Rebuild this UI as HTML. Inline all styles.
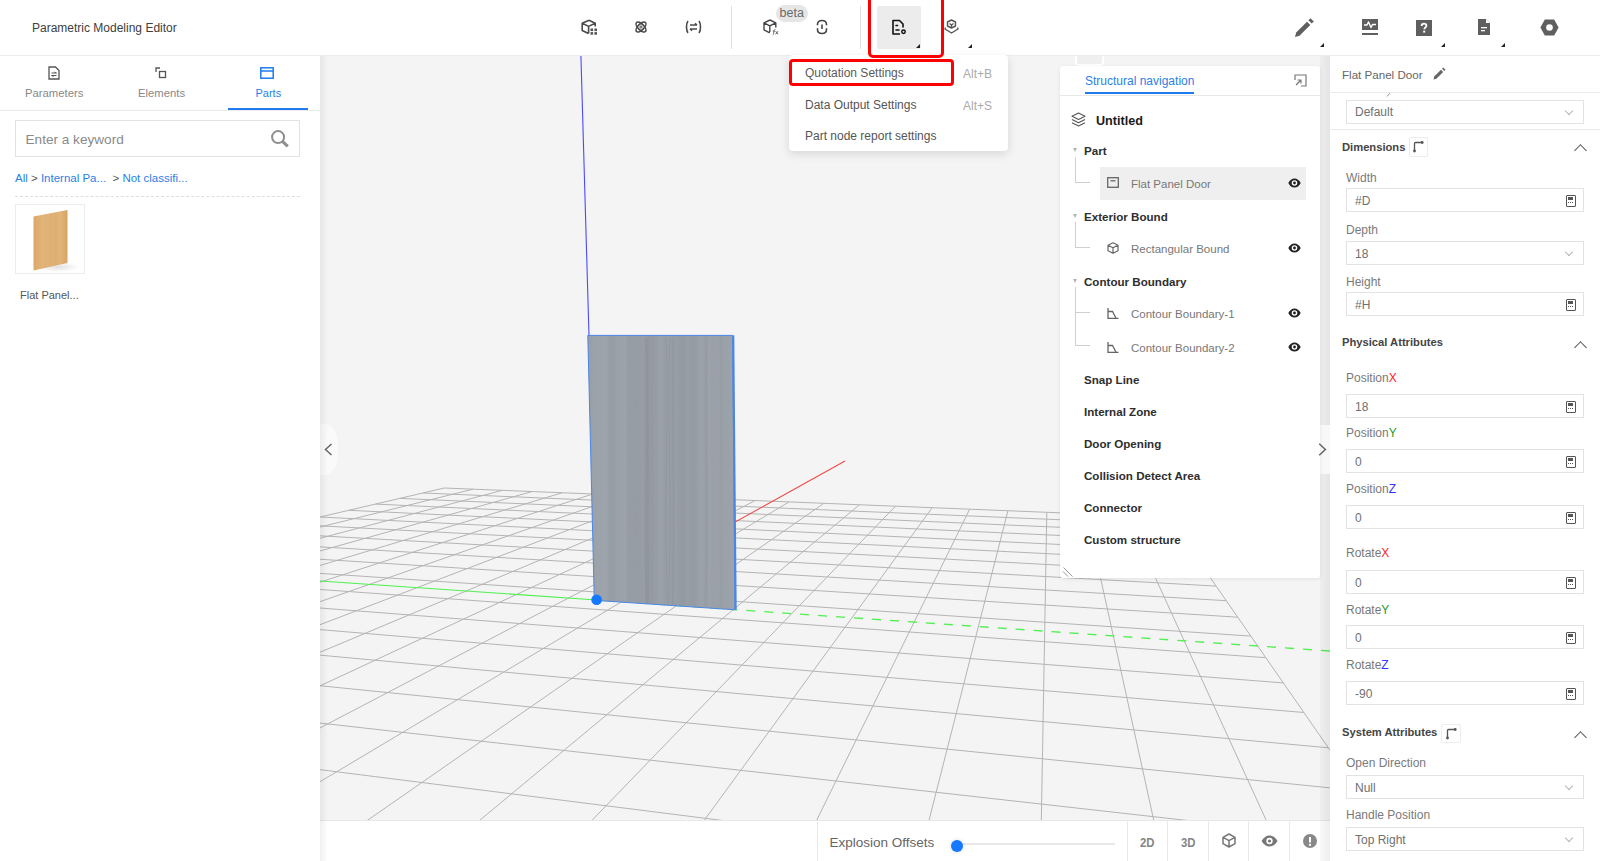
<!DOCTYPE html>
<html><head><meta charset="utf-8">
<style>
*{box-sizing:border-box;margin:0;padding:0}
html,body{width:1600px;height:861px;overflow:hidden;background:#fff;font-family:"Liberation Sans",sans-serif;color:#333}
.abs{position:absolute}
#header{position:absolute;left:0;top:0;width:1600px;height:56px;background:#fff;border-bottom:1px solid #ececec;z-index:5}
.t{position:absolute;white-space:nowrap;line-height:1}
.tri{position:absolute;width:0;height:0;border-left:4px solid transparent;border-bottom:4px solid #222}
#left{position:absolute;left:0;top:56px;width:320px;height:805px;background:#fff;z-index:3}
#vp{position:absolute;left:320px;top:56px;width:1010px;height:805px;background:#f4f4f4;overflow:hidden}
#right{position:absolute;left:1330px;top:56px;width:270px;height:805px;background:#fff;z-index:3}
.inp{position:absolute;left:16px;width:238px;height:24px;border:1px solid #e3e3e3;background:#fff}
.lbl{position:absolute;left:16px;font-size:12px;color:#7a7a7a;line-height:1}
.val{position:absolute;left:8px;top:5px;font-size:12px;color:#707070;line-height:14px}
.calc{position:absolute;right:7px;top:6px;width:10px;height:12px;border:1.5px solid #555;border-radius:1px}
.calc:before{content:"";position:absolute;left:1px;top:1px;width:5px;height:3px;background:#555}
.calc:after{content:"";position:absolute;left:1px;top:6px;width:5px;height:3px;border-top:1px dotted #555;border-bottom:1px dotted #555}
.chev{position:absolute;right:11px;top:7px;width:6px;height:6px;border-right:1px solid #b5b5b5;border-bottom:1px solid #b5b5b5;transform:rotate(45deg)}
.sec{position:absolute;left:12px;font-size:11.2px;font-weight:bold;color:#444;line-height:1}
.up{position:absolute;left:246px;width:9px;height:9px;border-left:1.3px solid #555;border-top:1.3px solid #555;transform:rotate(45deg)}
.nb{position:absolute;left:24px;font-size:11.6px;font-weight:bold;color:#2e2e2e;line-height:1}
.nc{position:absolute;left:71px;font-size:11.5px;color:#777;line-height:1}
.eye{position:absolute;left:228px;width:13px;height:10px}
</style></head><body>
<div id="header">
<div class="t" style="left:32px;top:22px;font-size:12px;color:#404040">Parametric Modeling Editor</div>
<!-- tool icons -->
<svg class="abs" style="left:581px;top:19px" width="17" height="16" viewBox="0 0 17 16" fill="none" stroke="#4a4a4a" stroke-width="1.6" stroke-linejoin="round">
<path d="M8 1.2L1.2 4.2V11.5L7.5 14.5M8 1.2L14.2 4.2V7.5M1.2 4.2L7.6 7.4L14.2 4.2M7.6 7.4V14.5"/>
<g fill="#555" stroke="none"><rect x="9.5" y="9.5" width="2.6" height="2.6"/><rect x="13.4" y="9.5" width="2.6" height="2.6"/><rect x="9.5" y="13.1" width="2.6" height="2.6"/><rect x="13.4" y="13.1" width="2.6" height="2.6"/></g>
</svg>
<svg class="abs" style="left:634px;top:20px" width="14" height="14" viewBox="0 0 14 14" fill="none" stroke="#4a4a4a" stroke-width="1.6">
<ellipse cx="7" cy="7" rx="6.3" ry="3" transform="rotate(45 7 7)"/><ellipse cx="7" cy="7" rx="6.3" ry="3" transform="rotate(-45 7 7)"/><circle cx="7" cy="7" r="1.1" stroke-width="1"/>
</svg>
<svg class="abs" style="left:685px;top:20px" width="17" height="14" viewBox="0 0 17 14" fill="none" stroke="#4a4a4a" stroke-width="1.6">
<path d="M3 1C1 3.5 1 10.5 3 13M14 1C16 3.5 16 10.5 14 13"/><path d="M5 5H12M10 3.3L12 5M12 9H5M7 10.7L5 9" stroke-width="1.4"/>
</svg>
<div class="abs" style="left:731px;top:6px;width:1px;height:43px;background:#e0e0e0"></div>
<div class="abs" style="left:776px;top:5px;width:32px;height:17px;border-radius:9px;background:#e6e6e6"></div>
<div class="t" style="left:779.5px;top:7px;font-size:12.5px;color:#6a6a6a">beta</div>
<svg class="abs" style="left:763px;top:19px" width="17" height="17" viewBox="0 0 17 17" fill="none" stroke="#444" stroke-width="1.4" stroke-linejoin="round">
<path d="M7 1L1 3.8V10.8L6.8 13.8M7 1L12.8 3.8V8.5M1 3.8L6.8 6.8L12.8 3.8M6.8 6.8V13"/>
<path d="M9.8 15.8C10.6 15.6 10.6 14.5 10.9 12.5C11.1 11.2 11.4 10.4 12.3 10.4M9.8 12.1H11.8M12.6 12.2L15 15.3M15 12.2L12.6 15.3" stroke-width="0.9" stroke="#555"/>
</svg>
<svg class="abs" style="left:816px;top:19px" width="12" height="16" viewBox="0 0 12 16" fill="none" stroke="#444" stroke-width="1.6">
<path d="M1.5 6.3V5.5C1.5 3 3 1.5 6 1.5S10.5 3 10.5 5.5V6.3M1.5 9.2V10.5C1.5 13 3 14.5 6 14.5S10.5 13 10.5 10.5V9.2M6 5.5V10"/>
</svg>
<div class="abs" style="left:860px;top:6px;width:1px;height:43px;background:#e0e0e0"></div>
<div class="abs" style="left:877px;top:6px;width:44px;height:43px;background:#ececec;border-radius:2px"></div>
<svg class="abs" style="left:891px;top:19px" width="17" height="17" viewBox="0 0 17 17" fill="none" stroke="#111" stroke-width="1.6" stroke-linejoin="round">
<path d="M9 15H2V1.5H8.5L12 5V8.5"/><path d="M5 6.5H6.5M5 11H8" stroke-linecap="round"/><circle cx="12.5" cy="12.8" r="1.7" stroke-width="1.5"/>
</svg>
<div class="tri" style="left:915.5px;top:43.5px;border-bottom-color:#222"></div>
<svg class="abs" style="left:944px;top:19px" width="15" height="16" viewBox="0 0 15 16" fill="none" stroke="#555" stroke-width="1.4" stroke-linejoin="round">
<path d="M7.5 1L3.5 3V7L7.5 9L11.5 7V3Z"/><path d="M5.5 4.5L7.5 6L9.5 4.5M7.5 6V8"/><path d="M1.5 8.5L1 10L7.5 14L14 10L13.5 8.5"/>
</svg>
<div class="tri" style="left:967.5px;top:43.5px"></div>
<!-- right icons -->
<svg class="abs" style="left:1294px;top:17px" width="21" height="21" viewBox="0 0 21 21">
<path d="M1 20L2.2 15.5L13 4.7L16.3 8L5.5 18.8Z" fill="#5f5f5f"/><path d="M14.4 3.3L16.5 1.2L19.8 4.5L17.7 6.6Z" fill="#5f5f5f"/>
</svg>
<div class="tri" style="left:1320px;top:43px"></div>
<svg class="abs" style="left:1362px;top:19px" width="16" height="17" viewBox="0 0 16 17">
<rect x="0" y="0" width="16" height="11" fill="#5f5f5f"/><path d="M2 6H5L6.5 3L9 8.5L10.5 5.5H14" fill="none" stroke="#fff" stroke-width="1.4" stroke-linejoin="round"/><rect x="0" y="14" width="16" height="2" fill="#5f5f5f"/>
</svg>
<svg class="abs" style="left:1416px;top:19.5px" width="16" height="16" viewBox="0 0 16 16">
<rect x="0" y="0" width="16" height="16" fill="#5f5f5f"/><path d="M5.6 6C5.6 4.5 6.6 3.6 8 3.6S10.4 4.5 10.4 5.8C10.4 7.3 8.3 7.5 8.3 9.3" fill="none" stroke="#fff" stroke-width="1.8"/><rect x="7.2" y="10.6" width="2" height="2" fill="#fff"/>
</svg>
<div class="tri" style="left:1441px;top:43px"></div>
<svg class="abs" style="left:1478px;top:19px" width="12" height="16" viewBox="0 0 12 16">
<path d="M0 0H8L12 4V16H0Z" fill="#5f5f5f"/><path d="M8 0V4H12" fill="#fff"/><rect x="3" y="8" width="6" height="1.3" fill="#fff"/><rect x="3" y="11" width="4" height="1.3" fill="#fff"/>
</svg>
<div class="tri" style="left:1501px;top:43px"></div>
<svg class="abs" style="left:1540px;top:19px" width="19" height="17" viewBox="0 0 19 17">
<path d="M4.8 0.5H14.2L18.6 8.5L14.2 16.5H4.8L0.4 8.5Z" fill="#5f5f5f"/><circle cx="9.5" cy="8.5" r="3.3" fill="#fff"/>
</svg>
</div>
<div class="abs" style="left:868px;top:-4px;width:76px;height:61.5px;border:3px solid #f00;border-radius:5px;z-index:8"></div>
<div id="left">
<!-- tabs -->
<svg class="abs" style="left:48px;top:10px" width="12" height="14" viewBox="0 0 12 14" fill="none" stroke="#555" stroke-width="1.3">
<path d="M1 1H7.5L11 4.5V13H1Z"/><path d="M3.5 7H8.5M3.5 9.5H8.5" stroke-width="1"/><path d="M6.5 6L8.5 7M5.5 10.5L3.5 9.5" stroke-width="0.9"/>
</svg>
<div class="t" style="left:25px;top:32px;font-size:11.3px;color:#888">Parameters</div>
<svg class="abs" style="left:155px;top:11px" width="12" height="12" viewBox="0 0 12 12" fill="none" stroke="#555" stroke-width="1.3">
<path d="M1 5V1H5"/><rect x="4.5" y="4.5" width="6" height="6"/>
</svg>
<div class="t" style="left:138px;top:32px;font-size:11.3px;color:#888">Elements</div>
<svg class="abs" style="left:260px;top:11px" width="14" height="12" viewBox="0 0 14 12" fill="none" stroke="#1e7bf0" stroke-width="1.5">
<rect x="0.8" y="0.8" width="12.4" height="10.4"/><path d="M0.8 4H13.2"/>
</svg>
<div class="t" style="left:255.5px;top:32px;font-size:11px;color:#2a7fe8">Parts</div>
<div class="abs" style="left:0;top:54px;width:320px;height:1px;background:#ebebeb"></div>
<div class="abs" style="left:228px;top:52px;width:80px;height:2px;background:#1e7bf0"></div>
<!-- search -->
<div class="abs" style="left:15px;top:64px;width:285px;height:37px;border:1px solid #e2e2e2;background:#fff"></div>
<div class="t" style="left:25.5px;top:77px;font-size:13.6px;color:#8a8a8a">Enter a keyword</div>
<svg class="abs" style="left:270px;top:73px" width="20" height="20" viewBox="0 0 20 20" fill="none" stroke="#8e8e8e" stroke-width="2">
<circle cx="8.1" cy="8.1" r="6"/><path d="M12.4 12.4L17.8 17.4" stroke-width="3"/>
</svg>
<div class="t" style="left:15px;top:116.5px;font-size:11.5px;color:#2a7fe8">All <span style="color:#555">&gt;</span> Internal Pa... &nbsp;<span style="color:#555">&gt;</span> Not classifi...</div>
<div class="abs" style="left:15px;top:140px;width:285px;height:0;border-top:1px dashed #dedede"></div>
<!-- thumb -->
<div class="abs" style="left:15px;top:148px;width:70px;height:70px;border:1px solid #ececec;background:#fff;overflow:hidden">
<svg class="abs" style="left:0;top:0" width="70" height="70" viewBox="0 0 70 70">
<defs><linearGradient id="wd" x1="0" x2="1" y1="0" y2="0"><stop offset="0" stop-color="#dca869"/><stop offset="0.3" stop-color="#e2b57a"/><stop offset="0.5" stop-color="#deb075"/><stop offset="0.8" stop-color="#e0b378"/><stop offset="1" stop-color="#d6a465"/></linearGradient>
<radialGradient id="sh" cx="0.5" cy="0.5" r="0.5"><stop offset="0" stop-color="#000" stop-opacity="0.12"/><stop offset="1" stop-color="#000" stop-opacity="0"/></radialGradient></defs>
<ellipse cx="42" cy="62" rx="22" ry="5" fill="url(#sh)"/>
<path d="M17.5 11.5L51.5 5V58L17.5 65.5Z" fill="url(#wd)"/>
<path d="M29 9.3V63M40 7.2V60.5" stroke="#c99555" stroke-width="0.5" opacity="0.35"/>
</svg>
</div>
<div class="t" style="left:20px;top:234px;font-size:11px;color:#555">Flat Panel...</div>
</div>
<div class="abs" style="left:320px;top:56px;width:8px;height:805px;background:linear-gradient(90deg,rgba(0,0,0,0.06),rgba(0,0,0,0));z-index:4"></div>
<div id="vp">
<svg class="abs" style="left:0;top:0" width="1010" height="805" viewBox="0 0 1010 805">
<defs>
<linearGradient id="wood" x1="0" x2="1" y1="0" y2="0"><stop offset="0.000" stop-color="#999fa7"/><stop offset="0.025" stop-color="#9aa0a8"/><stop offset="0.050" stop-color="#9ca2aa"/><stop offset="0.075" stop-color="#9da3ab"/><stop offset="0.100" stop-color="#9da3ab"/><stop offset="0.125" stop-color="#9ea4ac"/><stop offset="0.150" stop-color="#979da5"/><stop offset="0.175" stop-color="#979da5"/><stop offset="0.200" stop-color="#9ba1a9"/><stop offset="0.225" stop-color="#9ba1a9"/><stop offset="0.250" stop-color="#9da3ab"/><stop offset="0.275" stop-color="#979da5"/><stop offset="0.300" stop-color="#979da5"/><stop offset="0.325" stop-color="#969ca4"/><stop offset="0.350" stop-color="#979da5"/><stop offset="0.375" stop-color="#989ea6"/><stop offset="0.400" stop-color="#949aa2"/><stop offset="0.425" stop-color="#949aa2"/><stop offset="0.450" stop-color="#949aa2"/><stop offset="0.475" stop-color="#999fa7"/><stop offset="0.500" stop-color="#9ba1a9"/><stop offset="0.525" stop-color="#979da5"/><stop offset="0.550" stop-color="#9aa0a8"/><stop offset="0.575" stop-color="#969ca4"/><stop offset="0.600" stop-color="#989ea6"/><stop offset="0.625" stop-color="#959ba3"/><stop offset="0.650" stop-color="#9399a1"/><stop offset="0.675" stop-color="#989ea6"/><stop offset="0.700" stop-color="#969ca4"/><stop offset="0.725" stop-color="#959ba3"/><stop offset="0.750" stop-color="#9aa0a8"/><stop offset="0.775" stop-color="#9ca2aa"/><stop offset="0.800" stop-color="#989ea6"/><stop offset="0.825" stop-color="#9ca2aa"/><stop offset="0.850" stop-color="#9aa0a8"/><stop offset="0.875" stop-color="#9ba1a9"/><stop offset="0.900" stop-color="#979da5"/><stop offset="0.925" stop-color="#9ba1a9"/><stop offset="0.950" stop-color="#9ba1a9"/><stop offset="0.975" stop-color="#9da3ab"/><stop offset="1.000" stop-color="#9ea4ac"/></linearGradient>
<clipPath id="pclip"><path d="M267.8 279.4L412.7 279.4L415.1 553.8L274.3 544.3Z"/></clipPath></defs>
<path d="M-1377.8 783.2L124.2 432.0 M-1320.1 797.7L153.0 433.2 M-1258.8 813.0L182.2 434.4 M-1193.6 829.4L211.9 435.6 M-1124.2 846.8L242.2 436.8 M-1050.2 865.3L272.9 438.0 M-971.0 885.2L304.2 439.3 M-886.2 906.5L336.0 440.6 M-795.0 929.3L368.4 441.9 M-696.8 953.9L401.4 443.2 M-590.7 980.6L435.0 444.6 M-475.7 1009.4L469.1 445.9 M-350.6 1040.8L503.9 447.3 M-214.1 1075.0L539.4 448.8 M-64.4 1112.5L575.5 450.2 M100.3 1153.8L612.2 451.7 M282.5 1199.5L649.7 453.2 M485.1 1250.3L687.9 454.8 M711.7 1307.2L726.8 456.3 M967.0 1371.2L766.5 457.9 M1256.6 1443.8L807.0 459.6 M1588.1 1526.9L848.3 461.2 M-1377.8 783.2L1588.1 1526.9 M-1155.2 731.1L1391.4 1243.6 M-975.1 689.0L1268.1 1065.9 M-826.4 654.3L1183.5 944.1 M-701.5 625.1L1121.9 855.3 M-595.2 600.2L1075.0 787.8 M-503.6 578.8L1038.1 734.7 M-423.9 560.2L1008.4 691.8 M-353.8 543.8L983.9 656.5 M-291.8 529.3L963.3 626.9 M-236.5 516.4L945.8 601.7 M-186.8 504.8L930.8 580.1 M-142.0 494.3L917.7 561.2 M-101.4 484.8L906.2 544.7 M-64.4 476.2L896.1 530.1 M-30.6 468.2L887.0 517.0 M0.5 461.0L878.9 505.3 M29.1 454.3L871.6 494.8 M55.6 448.1L864.9 485.2 M80.2 442.4L858.9 476.5 M103.0 437.0L853.4 468.5 M124.2 432.0L848.3 461.2" fill="none" stroke="#b4b4b4" stroke-width="1"/>
<path d="M0 525L276.6 544" stroke="#50f050" stroke-width="1.1"/>
<path d="M276.6 544L1010 595" stroke="#50f050" stroke-width="1.3" stroke-dasharray="9 9" stroke-dashoffset="-6"/>
<path d="M274.6 544.1L525 405" stroke="#f04848" stroke-width="1.05"/>
<path d="M276.6 544L260.9 -1" stroke="#4a4aff" stroke-width="1.1"/>
<path d="M267.8 279.4L412.7 279.4L415.1 553.8L274.3 544.3Z" fill="url(#wood)"/>
<g clip-path="url(#pclip)"><path d="M334.4 282C334.8 360 334.1 460 334.6 548" stroke="#a3a9b1" stroke-width="1.0" fill="none" opacity="0.3"/><path d="M390.0 282C388.1 360 391.9 460 389.1 548" stroke="#a3a9b1" stroke-width="1.1" fill="none" opacity="0.3"/><path d="M381.4 282C379.0 360 383.9 460 380.2 548" stroke="#a3a9b1" stroke-width="0.7" fill="none" opacity="0.3"/><path d="M346.3 282C348.7 360 344.0 460 347.5 548" stroke="#858a92" stroke-width="1.1" fill="none" opacity="0.3"/><path d="M326.7 282C326.4 360 327.0 460 326.5 548" stroke="#858a92" stroke-width="1.1" fill="none" opacity="0.3"/><path d="M386.8 282C384.2 360 389.4 460 385.5 548" stroke="#858a92" stroke-width="0.8" fill="none" opacity="0.3"/><path d="M305.4 282C302.6 360 308.2 460 304.0 548" stroke="#a3a9b1" stroke-width="0.9" fill="none" opacity="0.3"/><path d="M353.6 282C351.7 360 355.4 460 352.6 548" stroke="#858a92" stroke-width="1.1" fill="none" opacity="0.3"/><path d="M341.0 282C341.9 360 340.0 460 341.5 548" stroke="#a3a9b1" stroke-width="1.1" fill="none" opacity="0.3"/><path d="M328.1 282C328.4 360 327.8 460 328.3 548" stroke="#858a92" stroke-width="1.2" fill="none" opacity="0.3"/><path d="M315.5 282C313.9 360 317.1 460 314.7 548" stroke="#a3a9b1" stroke-width="0.6" fill="none" opacity="0.3"/><path d="M349.7 282C347.4 360 352.1 460 348.5 548" stroke="#858a92" stroke-width="1.3" fill="none" opacity="0.3"/><path d="M325.3 282C328.1 360 322.6 460 326.7 548" stroke="#858a92" stroke-width="0.8" fill="none" opacity="0.3"/><path d="M399.9 282C397.2 360 402.6 460 398.6 548" stroke="#a3a9b1" stroke-width="1.4" fill="none" opacity="0.3"/></g><path d="M267.8 279.4L412.7 279.4L415.1 553.8L274.3 544.3Z" fill="none" stroke="#4a86e8" stroke-width="1"/>
<path d="M413.2 279.4L415.6 553.8" stroke="#4a86e8" stroke-width="2.2"/>
<circle cx="276.6" cy="543.8" r="5.3" fill="#1677ff"/>
</svg>
<!-- left handle -->
<div class="abs" style="left:0;top:368px;width:18px;height:51px;background:#fafafa;border-radius:0 14px 14px 0/0 20px 20px 0"></div>
<svg class="abs" style="left:4px;top:387px" width="9" height="13" viewBox="0 0 9 13" fill="none" stroke="#666" stroke-width="1.5"><path d="M7.5 1L1.5 6.5L7.5 12"/></svg>
<!-- bottom bar -->
<div class="abs" style="left:0;top:764px;width:1010px;height:41px;background:#fff;border-top:1px solid #e8e8e8"></div>
<div class="abs" style="left:497px;top:765px;width:1px;height:40px;background:#eaeaea"></div>
<div class="t" style="left:509.5px;top:780px;font-size:13.5px;color:#666">Explosion Offsets</div>
<div class="abs" style="left:637px;top:787px;width:158px;height:2px;background:#e8e8e8"></div>
<div class="abs" style="left:631px;top:784px;width:12px;height:12px;border-radius:50%;background:#1677ff;box-shadow:0 0 4px rgba(0,0,0,0.15)"></div>
<div class="abs" style="left:807px;top:765px;width:1px;height:40px;background:#eaeaea"></div>
<div class="abs" style="left:847px;top:765px;width:1px;height:40px;background:#eaeaea"></div>
<div class="abs" style="left:888px;top:765px;width:1px;height:40px;background:#eaeaea"></div>
<div class="abs" style="left:928px;top:765px;width:1px;height:40px;background:#eaeaea"></div>
<div class="abs" style="left:969px;top:765px;width:1px;height:40px;background:#eaeaea"></div>
<div class="t" style="left:819.5px;top:779.5px;font-size:13.5px;font-weight:bold;color:#858585;transform:scaleX(0.84);transform-origin:0 0">2D</div>
<div class="t" style="left:860.5px;top:779.5px;font-size:13.5px;font-weight:bold;color:#858585;transform:scaleX(0.84);transform-origin:0 0">3D</div>
<svg class="abs" style="left:902px;top:777px" width="14" height="15" viewBox="0 0 14 15" fill="none" stroke="#777" stroke-width="1.5" stroke-linejoin="round">
<path d="M7 1L13 4.3V10.7L7 14L1 10.7V4.3Z M1 4.3L7 7.6L13 4.3M7 7.6V14"/>
</svg>
<svg class="abs" style="left:941px;top:779px" width="17" height="12" viewBox="0 0 17 12">
<path d="M0.5 6C2.5 2.5 5.5 0.5 8.5 0.5S14.5 2.5 16.5 6C14.5 9.5 11.5 11.5 8.5 11.5S2.5 9.5 0.5 6Z" fill="#777"/><circle cx="8.5" cy="6" r="3.2" fill="#fff"/><circle cx="8.5" cy="6" r="1.6" fill="#777"/>
</svg>
<svg class="abs" style="left:983px;top:778px" width="14" height="14" viewBox="0 0 14 14">
<circle cx="7" cy="7" r="7" fill="#888"/><rect x="6" y="3" width="2" height="5.5" fill="#fff"/><rect x="6" y="9.8" width="2" height="2" fill="#fff"/>
</svg>
<!-- right shadow strip -->
<div class="abs" style="left:1000px;top:0;width:10px;height:805px;background:linear-gradient(90deg,rgba(0,0,0,0.025),rgba(0,0,0,0.065))"></div>
<div class="abs" style="left:1000px;top:369px;width:10px;height:49px;background:#f8f8f8"></div>

</div>
<!-- nav panel -->
<svg class="abs" style="left:1317.5px;top:443px;z-index:5" width="9" height="13" viewBox="0 0 9 13" fill="none" stroke="#666" stroke-width="1.5"><path d="M1.2 0.8L7.4 6.5L1.2 12.2"/></svg>
<div class="abs" style="left:1075px;top:55px;width:29px;height:11px;border:2px solid #fff;border-top:none;border-radius:0 0 4px 4px;background:#efefef;z-index:4"></div>
<div class="abs" style="left:1060px;top:66px;width:260px;height:512px;background:#fff;border-radius:3px;box-shadow:0 1px 4px rgba(0,0,0,0.08);z-index:4">
<div class="abs" style="left:0;top:29px;width:260px;height:1px;background:#e8e8e8"></div>
<div class="t" style="left:25px;top:8.5px;font-size:12px;color:#2a7fe8">Structural navigation</div>
<div class="abs" style="left:25px;top:25.5px;width:109px;height:2px;background:#1e7bf0"></div>
<svg class="abs" style="left:234px;top:8px" width="13" height="13" viewBox="0 0 13 13" fill="none" stroke="#777" stroke-width="1.2">
<path d="M1 6V1H12V12H7"/><path d="M2 11L7 6M3.5 6H7V9.5"/>
</svg>
<svg class="abs" style="left:11px;top:46px" width="15" height="15" viewBox="0 0 15 15" fill="none" stroke="#555" stroke-width="1.1" stroke-linejoin="round">
<path d="M7.5 1L14 4.2L7.5 7.4L1 4.2Z"/><path d="M1 7.5L7.5 10.7L14 7.5M1 10.8L7.5 14L14 10.8"/>
</svg>
<div class="t" style="left:36px;top:49.3px;font-size:12.6px;font-weight:bold;color:#1a1a1a">Untitled</div>
<!-- tree -->
<div class="tri2 abs" style="left:13px;top:82px;width:0;height:0;border-left:2.5px solid transparent;border-right:2.5px solid transparent;border-top:4px solid #b5b5b5"></div>
<div class="nb" style="top:79px">Part</div>
<div class="abs" style="left:15px;top:91px;width:15px;height:26px;border-left:1px solid #cfcfcf;border-bottom:1px solid #cfcfcf"></div>
<div class="abs" style="left:40px;top:101px;width:206px;height:33px;background:#efefef"></div>
<svg class="abs" style="left:47px;top:111px" width="12" height="11" viewBox="0 0 12 11" fill="none" stroke="#666" stroke-width="1.3"><rect x="0.7" y="0.7" width="10.6" height="9.6"/><path d="M3.5 3.8H8.5"/></svg>
<div class="nc" style="top:113.0px">Flat Panel Door</div>
<svg class="eye" style="top:111.5px" viewBox="0 0 13 10"><path d="M0.3 5C1.8 2 4 0.5 6.5 0.5S11.2 2 12.7 5C11.2 8 9 9.5 6.5 9.5S1.8 8 0.3 5Z" fill="#222"/><circle cx="6.5" cy="5" r="2.8" fill="#fff"/><circle cx="6.5" cy="5" r="1.4" fill="#222"/></svg>
<div class="abs" style="left:13px;top:148px;width:0;height:0;border-left:2.5px solid transparent;border-right:2.5px solid transparent;border-top:4px solid #b5b5b5"></div>
<div class="nb" style="top:144.5px">Exterior Bound</div>
<div class="abs" style="left:15px;top:156px;width:15px;height:26px;border-left:1px solid #cfcfcf;border-bottom:1px solid #cfcfcf"></div>
<svg class="abs" style="left:47px;top:176px" width="12" height="12" viewBox="0 0 12 12" fill="none" stroke="#666" stroke-width="1.2" stroke-linejoin="round"><path d="M6 0.8L11 3.3V8.7L6 11.2L1 8.7V3.3Z M1 3.3L6 5.8L11 3.3M6 5.8V11.2"/></svg>
<div class="nc" style="top:178.0px">Rectangular Bound</div>
<svg class="eye" style="top:177px" viewBox="0 0 13 10"><path d="M0.3 5C1.8 2 4 0.5 6.5 0.5S11.2 2 12.7 5C11.2 8 9 9.5 6.5 9.5S1.8 8 0.3 5Z" fill="#222"/><circle cx="6.5" cy="5" r="2.8" fill="#fff"/><circle cx="6.5" cy="5" r="1.4" fill="#222"/></svg>
<div class="abs" style="left:13px;top:213px;width:0;height:0;border-left:2.5px solid transparent;border-right:2.5px solid transparent;border-top:4px solid #b5b5b5"></div>
<div class="nb" style="top:209.5px">Contour Boundary</div>
<div class="abs" style="left:15px;top:221px;width:15px;height:26px;border-left:1px solid #cfcfcf;border-bottom:1px solid #cfcfcf"></div>
<div class="abs" style="left:15px;top:247px;width:15px;height:33px;border-left:1px solid #cfcfcf;border-bottom:1px solid #cfcfcf"></div>
<svg class="abs" style="left:47px;top:242px" width="12" height="11" viewBox="0 0 12 11" fill="none" stroke="#666" stroke-width="1.3"><path d="M1 0V10.3H11.5M1 3.5H5.5L9 10.3"/></svg>
<div class="nc" style="top:243.0px">Contour Boundary-1</div>
<svg class="eye" style="top:241.8px" viewBox="0 0 13 10"><path d="M0.3 5C1.8 2 4 0.5 6.5 0.5S11.2 2 12.7 5C11.2 8 9 9.5 6.5 9.5S1.8 8 0.3 5Z" fill="#222"/><circle cx="6.5" cy="5" r="2.8" fill="#fff"/><circle cx="6.5" cy="5" r="1.4" fill="#222"/></svg>
<svg class="abs" style="left:47px;top:276px" width="12" height="11" viewBox="0 0 12 11" fill="none" stroke="#666" stroke-width="1.3"><path d="M1 0V10.3H11.5M1 3.5H5.5L9 10.3"/></svg>
<div class="nc" style="top:276.5px">Contour Boundary-2</div>
<svg class="eye" style="top:275.6px" viewBox="0 0 13 10"><path d="M0.3 5C1.8 2 4 0.5 6.5 0.5S11.2 2 12.7 5C11.2 8 9 9.5 6.5 9.5S1.8 8 0.3 5Z" fill="#222"/><circle cx="6.5" cy="5" r="2.8" fill="#fff"/><circle cx="6.5" cy="5" r="1.4" fill="#222"/></svg>
<div class="nb" style="top:308px">Snap Line</div>
<div class="nb" style="top:340px">Internal Zone</div>
<div class="nb" style="top:372px">Door Opening</div>
<div class="nb" style="top:404px">Collision Detect Area</div>
<div class="nb" style="top:435.5px">Connector</div>
<div class="nb" style="top:468px">Custom structure</div>
<svg class="abs" style="left:2px;top:500px" width="12" height="12" viewBox="0 0 12 12" stroke="#9a9a9a" stroke-width="1"><path d="M1.5 1.5L10.5 10.5M1 5.5L6 10.5"/></svg>
</div>
<!-- dropdown menu -->
<div class="abs" style="left:789px;top:55px;width:219px;height:96px;background:#fff;border-radius:4px;box-shadow:0 3px 10px rgba(0,0,0,0.12);z-index:6">
<div class="t" style="left:16px;top:12.0px;font-size:12px;color:#5a5a5a">Quotation Settings</div>
<div class="t" style="left:174px;top:13.0px;font-size:12px;color:#aaa">Alt+B</div>
<div class="t" style="left:16px;top:44.0px;font-size:12px;color:#555">Data Output Settings</div>
<div class="t" style="left:174px;top:45.0px;font-size:12px;color:#aaa">Alt+S</div>
<div class="t" style="left:16px;top:75.0px;font-size:12px;color:#555">Part node report settings</div>
<div class="abs" style="left:-0.5px;top:4px;width:165px;height:27px;border:3px solid #f00;border-radius:4px"></div>
</div>
<div id="right">
<div class="t" style="left:12px;top:13px;font-size:11.6px;color:#666">Flat Panel Door</div>
<svg class="abs" style="left:103px;top:10.5px" width="13" height="13" viewBox="0 0 13 13"><path d="M0.5 12.5L1.2 9.6L8 2.8L10.2 5L3.4 11.8Z" fill="#666"/><path d="M9 1.8L10.3 0.5L12.5 2.7L11.2 4Z" fill="#666"/></svg>
<div class="abs" style="left:0;top:36px;width:270px;height:1px;background:#ebebeb"></div>
<svg class="abs" style="left:55px;top:37px" width="6" height="4" viewBox="0 0 6 4"><path d="M5 0L2 3.5" stroke="#999" stroke-width="1"/></svg>
<div class="inp" style="top:44px"><div class="val" style="top:4px">Default</div><div class="chev"></div></div>
<div class="abs" style="left:0;top:73px;width:270px;height:1px;background:#ebebeb"></div>
<div class="sec" style="top:85.8px">Dimensions</div>
<div class="abs" style="left:78.5px;top:81.2px;width:19.5px;height:19.5px;border:1px solid #ececec;border-radius:2px"></div>
<svg class="abs" style="left:82px;top:84px" width="12" height="13" viewBox="0 0 12 13" fill="none" stroke="#555" stroke-width="1.3"><path d="M2.5 11V3.5Q2.5 2.5 3.5 2.5H10"/><circle cx="2.5" cy="11" r="1.4" fill="#555" stroke="none"/><circle cx="10.2" cy="2.5" r="1.4" fill="#555" stroke="none"/></svg>
<div class="up" style="top:90px"></div>
<div class="lbl" style="top:116px">Width</div>
<div class="inp" style="top:132px"><div class="val">#D</div><div class="calc"></div></div>
<div class="lbl" style="top:168px">Depth</div>
<div class="inp" style="top:185px"><div class="val">18</div><div class="chev"></div></div>
<div class="lbl" style="top:219.8px">Height</div>
<div class="inp" style="top:236px"><div class="val">#H</div><div class="calc"></div></div>
<div class="sec" style="top:281px">Physical Attributes</div>
<div class="up" style="top:287px"></div>
<div class="lbl" style="top:316px">Position<span style="color:#f22">X</span></div>
<div class="inp" style="top:338px"><div class="val">18</div><div class="calc"></div></div>
<div class="lbl" style="top:371.3px">Position<span style="color:#1a9a1a">Y</span></div>
<div class="inp" style="top:393px"><div class="val">0</div><div class="calc"></div></div>
<div class="lbl" style="top:427.3px">Position<span style="color:#33f">Z</span></div>
<div class="inp" style="top:449px"><div class="val">0</div><div class="calc"></div></div>
<div class="lbl" style="top:491px">Rotate<span style="color:#f22">X</span></div>
<div class="inp" style="top:514px"><div class="val">0</div><div class="calc"></div></div>
<div class="lbl" style="top:548px">Rotate<span style="color:#1a9a1a">Y</span></div>
<div class="inp" style="top:569px"><div class="val">0</div><div class="calc"></div></div>
<div class="lbl" style="top:603px">Rotate<span style="color:#33f">Z</span></div>
<div class="inp" style="top:625px"><div class="val">-90</div><div class="calc"></div></div>
<div class="sec" style="top:671px">System Attributes</div>
<div class="abs" style="left:111px;top:667.7px;width:19.5px;height:19.5px;border:1px solid #ececec;border-radius:2px"></div>
<svg class="abs" style="left:114.5px;top:670.5px" width="12" height="13" viewBox="0 0 12 13" fill="none" stroke="#555" stroke-width="1.3"><path d="M2.5 11V3.5Q2.5 2.5 3.5 2.5H10"/><circle cx="2.5" cy="11" r="1.4" fill="#555" stroke="none"/><circle cx="10.2" cy="2.5" r="1.4" fill="#555" stroke="none"/></svg>
<div class="up" style="top:677px"></div>
<div class="lbl" style="top:701.2px">Open Direction</div>
<div class="inp" style="top:719px"><div class="val">Null</div><div class="chev"></div></div>
<div class="lbl" style="top:753.4px">Handle Position</div>
<div class="inp" style="top:771px"><div class="val">Top Right</div><div class="chev"></div></div>
</div>
</body></html>
